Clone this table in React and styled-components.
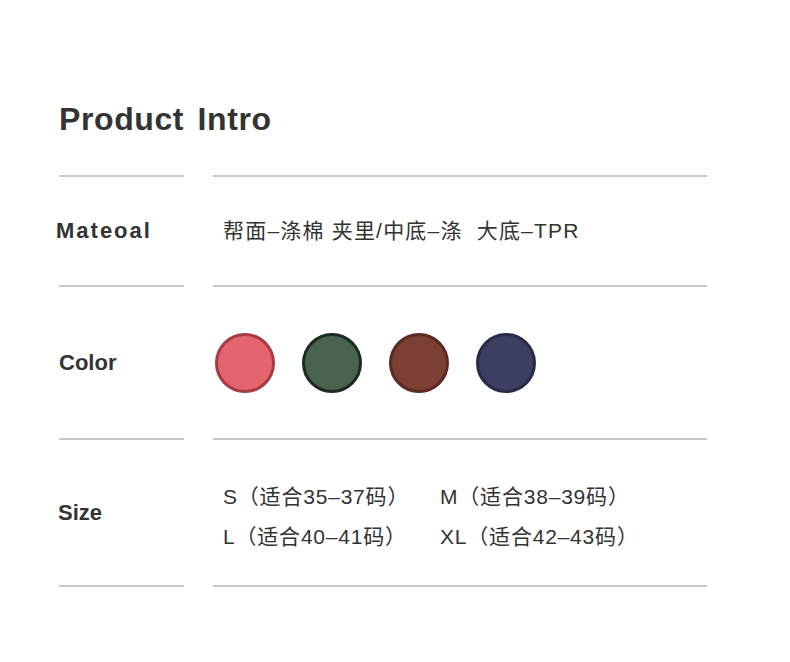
import React from "react";
import styled, { createGlobalStyle } from "styled-components";

const GlobalStyle = createGlobalStyle`
  body {
    margin: 0;
    background: #ffffff;
    font-family: "Liberation Sans", "Noto Sans CJK SC", sans-serif;
  }
`;

// Styled components

const Page = styled.div`
  width: 790px;
  min-height: 662px;
  box-sizing: border-box;
  padding: 101px 0 0 59px;
  background: #ffffff;
`;

const Title = styled.h1`
  margin: 0 0 38px;
  font-size: 32px;
  line-height: 36px;
  font-weight: 700;
  letter-spacing: 0.6px;
  word-spacing: 4px;
  color: #333333;
`;

const Table = styled.div`
  width: 648px;
  display: flex;
  flex-direction: column;
`;

const Rule = styled.div`
  display: grid;
  grid-template-columns: 125px 494px;
  column-gap: 29px;
  height: 2px;

  span {
    background: #c9c9c9;
  }
`;

const Row = styled.div`
  display: grid;
  grid-template-columns: 125px 494px;
  column-gap: 29px;
  align-items: center;
  height: ${(p) => p.$height}px;
`;

const Label = styled.div`
  font-size: 22px;
  font-weight: 700;
  color: #333333;
  margin-left: ${(p) => p.$shift || 0}px;
  letter-spacing: ${(p) => p.$spacing || 0}px;
`;

const Text = styled.div`
  padding-left: 10px;
  font-size: 21px;
  line-height: 30px;
  letter-spacing: 1.2px;
  color: #333333;
  white-space: pre;
`;

const Swatches = styled.div`
  display: flex;
  gap: 27px;
  padding-left: 2px;
`;

const Swatch = styled.div`
  width: 60px;
  height: 60px;
  box-sizing: border-box;
  border-radius: 50%;
  background: ${(p) => p.$fill};
  border: 3px solid ${(p) => p.$edge};
`;

const SizeGrid = styled.div`
  display: grid;
  grid-template-columns: 217px auto;
  margin-top: 8px;
  padding-left: 10px;
  font-size: 21px;
  line-height: 40px;
  letter-spacing: 0.8px;
  color: #333333;
  white-space: pre;
`;

const colors = [
  { fill: "#e3666e", edge: "#a73c46" },
  { fill: "#4a6351", edge: "#1c2b22" },
  { fill: "#7b3f33", edge: "#5b2a21" },
  { fill: "#3d3f60", edge: "#2a2c47" },
];

const sizes = [
  "S（适合35–37码）",
  "M（适合38–39码）",
  "L（适合40–41码）",
  "XL（适合42–43码）",
];

const Line = () => (
  <Rule>
    <span />
    <span />
  </Rule>
);

const App = () => {
  return (
    <>
      <GlobalStyle />
      <Page>
        <Title>Product Intro</Title>
        <Table>
          <Line />
          <Row $height={108}>
            <Label $shift={-3} $spacing={2}>
              Mateoal
            </Label>
            <Text>帮面–涤棉 夹里/中底–涤  大底–TPR</Text>
          </Row>
          <Line />
          <Row $height={151}>
            <Label>Color</Label>
            <Swatches>
              {colors.map((c) => (
                <Swatch key={c.fill} $fill={c.fill} $edge={c.edge} />
              ))}
            </Swatches>
          </Row>
          <Line />
          <Row $height={145}>
            <Label $shift={-1}>Size</Label>
            <SizeGrid>
              {sizes.map((s) => (
                <span key={s}>{s}</span>
              ))}
            </SizeGrid>
          </Row>
          <Line />
        </Table>
      </Page>
    </>
  );
};

export default App;
